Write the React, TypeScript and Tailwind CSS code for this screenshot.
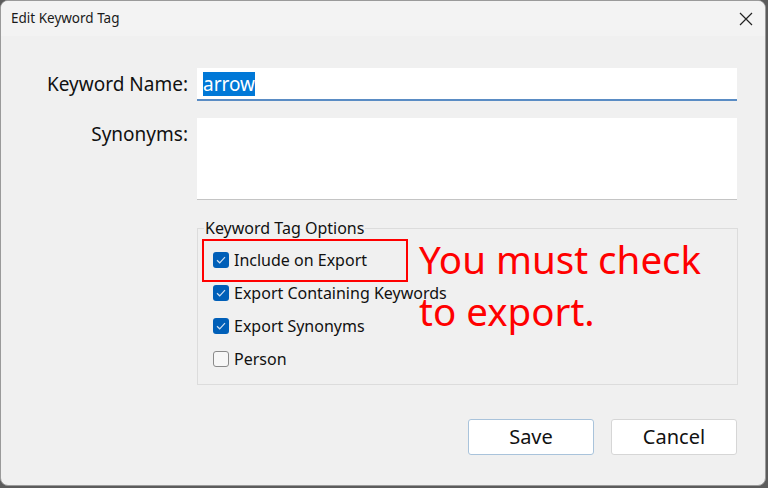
const font = { fontFamily: '"Noto Sans", "Open Sans", sans-serif' };

function Check({ checked, label }: { checked: boolean; label: string }) {
  return (
    <div className="flex items-center h-[33px]">
      {checked ? (
        <div className="w-[16px] h-[16px] rounded-[3px] bg-[#005fb8] flex items-center justify-center">
          <svg width="10" height="8" viewBox="0 0 10 8" fill="none">
            <path d="M1 4.2 L3.7 6.8 L9 1.2" stroke="#cfe0f2" strokeWidth="1.2" />
          </svg>
        </div>
      ) : (
        <div className="w-[16px] h-[16px] rounded-[3px] border border-[#8a8a8a] bg-[#f7f7f7]" />
      )}
      <span className="ml-[5px] text-[16px] text-[#111]">{label}</span>
    </div>
  );
}

export default function App() {
  return (
    <div className="w-[768px] h-[488px] bg-[#5c5c5c] overflow-hidden" style={font}>
      <div className="w-[766px] h-[486px] bg-[#f0f0f0] rounded-[8px] border border-[#9a9a9a] flex flex-col overflow-hidden">
        {/* タイトルバー */}
        <div className="h-[35px] bg-[#f3f3f3] flex items-center justify-between pl-[10px] pr-[12px]">
          <span className="text-[13.5px] text-[#1a1a1a]">Edit Keyword Tag</span>
          <svg width="14" height="14" viewBox="0 0 14 14">
            <path d="M1 1 L13 13 M13 1 L1 13" stroke="#222" strokeWidth="1.2" />
          </svg>
        </div>

        <div className="flex-1 relative">
          {/* キーワード名 */}
          <div className="flex mt-[32px]">
            <div className="w-[187px] text-right text-[19px] text-[#111] leading-[32px]">Keyword Name:</div>
            <div className="ml-[9px] w-[540px] h-[33px] bg-white border-b-2 border-[#5a8cc4] flex items-center pl-[6px]">
              <span className="bg-[#0078d7] text-white text-[19px] leading-[24px]">arrow</span>
            </div>
          </div>

          {/* 類義語 */}
          <div className="flex mt-[17px]">
            <div className="w-[187px] text-right text-[19px] text-[#111] leading-[32px]">Synonyms:</div>
            <div className="ml-[9px] w-[540px] h-[82px] bg-white border-b border-[#c4c4c4]" />
          </div>

          {/* オプション */}
          <div className="ml-[196px] mt-[28px] w-[541px] h-[157px] border border-[#dcdcdc] relative">
            <div className="absolute -top-[11px] left-[6px] bg-[#f0f0f0] px-[1px] text-[16px] leading-[20px] text-[#111]">
              Keyword Tag Options
            </div>
            <div className="pl-[15px] pt-[14px]">
              <Check checked label="Include on Export" />
              <Check checked label="Export Containing Keywords" />
              <Check checked label="Export Synonyms" />
              <Check checked={false} label="Person" />
            </div>
            <div className="absolute left-[4px] top-[10px] w-[206px] h-[43px] border-2 border-[#ff0000]" />
            <div className="absolute left-[221px] top-[4px] text-[38.5px] leading-[52px] text-[#ff0000]">
              You must check
              <br />
              to export.
            </div>
          </div>

          {/* ボタン */}
          <div className="flex justify-end gap-[17px] mr-[28px] mt-[34px]">
            <button className="w-[126px] h-[36px] bg-white border border-[#a9c3db] rounded-[3px] text-[20px] text-[#111]">Save</button>
            <button className="w-[126px] h-[36px] bg-white border border-[#d6d6d6] rounded-[3px] text-[20px] text-[#111]">Cancel</button>
          </div>
        </div>
      </div>
    </div>
  );
}
